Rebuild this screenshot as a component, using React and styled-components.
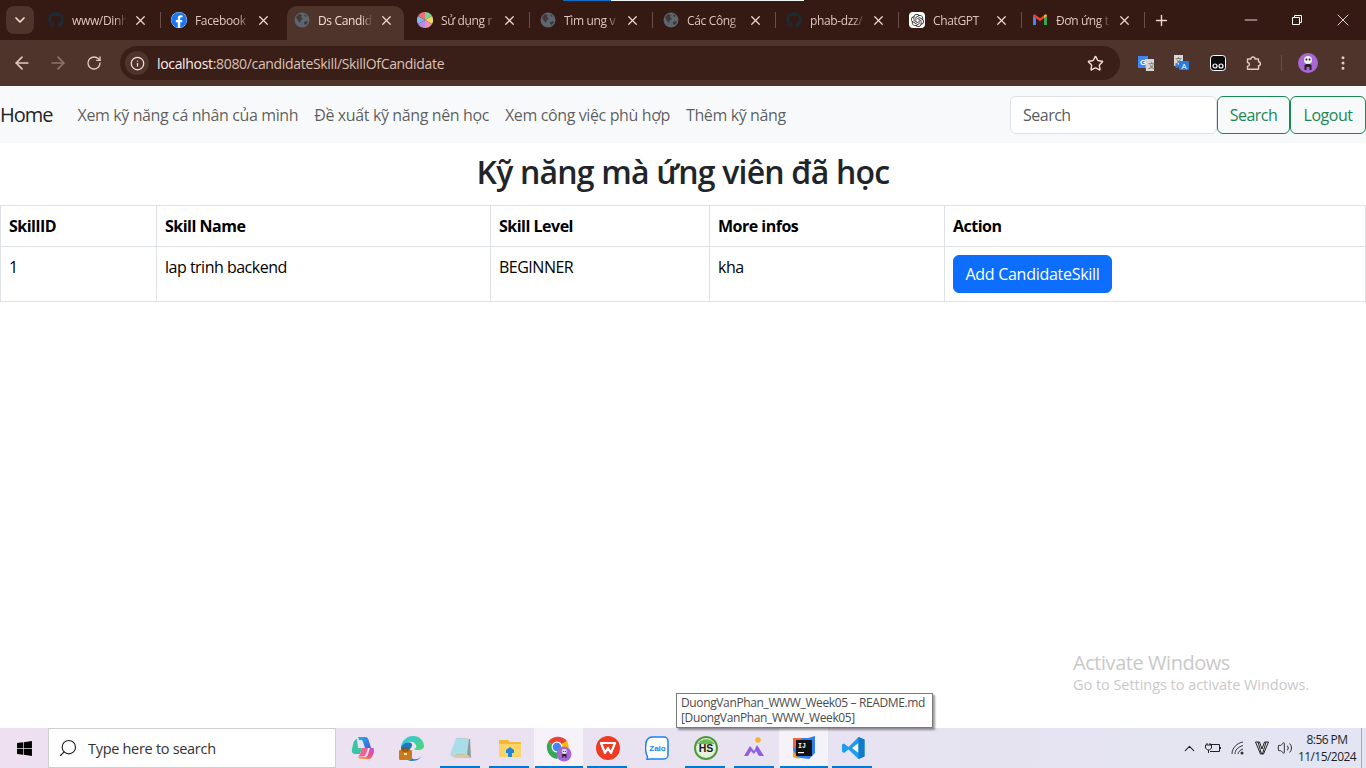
import React from 'react';
import styled, { createGlobalStyle } from 'styled-components';
import {
  ArrowLeft, ArrowRight, RotateCw, Info, Star, MoreVertical, X, Plus, Minus, ChevronDown, ChevronUp, Search as SearchIcon, Volume2,
} from 'lucide-react';
import { FaGithub, FaFacebook, FaWindows } from 'react-icons/fa';
import { SiOpenai } from 'react-icons/si';

const UI_FONT = '"Open Sans", "Noto Sans", "Liberation Sans", sans-serif';

const GlobalStyle = createGlobalStyle`
  html, body { margin: 0; padding: 0; height: 100%; overflow: hidden; background: #fff; }
  body { font-family: ${UI_FONT}; color: #212529; }
  * { box-sizing: border-box; }
`;

const Screen = styled.div`
  position: relative;
  display: flex;
  flex-direction: column;
  width: 1366px;
  height: 768px;
  overflow: hidden;
`;

/* browser chrome */
const TabStrip = styled.div`
  position: relative;
  display: flex;
  align-items: flex-end;
  height: 40px;
  padding-left: 5px;
  background: #351a14;
`;

const ShareBar = styled.div`
  position: absolute;
  top: 0;
  left: 563px;
  display: flex;
  height: 1px;
`;

const ShareSegment = styled.div`
  width: ${p => p.$w}px;
  background: ${p => p.$c};
`;

const TabMenu = styled.div`
  display: flex;
  align-items: center;
  justify-content: center;
  flex: none;
  width: 28px;
  height: 28px;
  margin: 0 4px 6px 1px;
  border-radius: 8px;
  background: #4f342c;
  color: #f3dfd6;
`;

const Tab = styled.div`
  position: relative;
  display: flex;
  align-items: center;
  flex: none;
  width: 123px;
  height: 34px;
  padding: 0 13px 6px 10px;
  color: ${p => (p.$active ? '#f0ddd4' : '#e0c5ba')};
  font-size: 12px;

  &::before {
    content: '';
    display: ${p => (p.$active ? 'block' : 'none')};
    position: absolute;
    z-index: 0;
    top: 0;
    bottom: 0;
    left: 3px;
    right: 3px;
    background: #4f342c;
    border-radius: 10px 10px 0 0;
  }

  &::after {
    content: '';
    display: ${p => (p.$sep ? 'block' : 'none')};
    position: absolute;
    right: 0;
    top: 6px;
    width: 1px;
    height: 16px;
    background: #6a4f46;
  }

  > * {
    position: relative;
    z-index: 1;
  }
`;

const Favicon = styled.span`
  display: flex;
  align-items: center;
  justify-content: center;
  flex: none;
  width: 16px;
  height: 16px;
  margin-right: 8px;
  background: ${p => p.$plate || 'transparent'};
  border-radius: ${p => p.$round || 0};
`;

const TabTitle = styled.span`
  flex: 1;
  min-width: 0;
  white-space: nowrap;
  letter-spacing: -0.35px;
  -webkit-mask-image: linear-gradient(90deg, #000 78%, transparent 100%);
  mask-image: linear-gradient(90deg, #000 78%, transparent 100%);
`;

const TabClose = styled.span`
  display: flex;
  flex: none;
  margin-left: 6px;
  color: #eed6cb;
`;

const NewTab = styled.div`
  display: flex;
  align-items: center;
  height: 34px;
  margin-left: 8px;
  padding-bottom: 6px;
  color: #ecd8ce;
`;

const WindowControls = styled.div`
  display: flex;
  margin-left: auto;
  align-self: flex-start;
`;

const WindowButton = styled.div`
  display: flex;
  align-items: center;
  justify-content: center;
  width: 46px;
  height: 40px;
  color: #fff;
`;

const Toolbar = styled.div`
  display: flex;
  align-items: center;
  height: 46px;
  padding: 0 4px;
  background: #4f342c;
  color: #e6c9bd;
`;

const NavButton = styled.div`
  display: flex;
  align-items: center;
  justify-content: center;
  flex: none;
  width: 36px;
  height: 34px;
  color: ${p => (p.$off ? '#8e746a' : '#e6c9bd')};
`;

const Omnibox = styled.div`
  display: flex;
  align-items: center;
  flex: none;
  width: 1000px;
  height: 34px;
  margin-left: 8px;
  padding: 0 16px 0 5px;
  border-radius: 17px;
  background: #3a1f18;
`;

const InfoChip = styled.div`
  display: flex;
  align-items: center;
  justify-content: center;
  width: 24px;
  height: 24px;
  margin-right: 8px;
  border-radius: 50%;
  background: #4f342c;
  color: #f3e3db;
`;

const Url = styled.div`
  flex: 1;
  font-size: 14px;
  letter-spacing: -0.33px;
  color: #dcc2b7;

  b {
    font-weight: 400;
    color: #fbeee8;
  }
`;

const ExtensionRow = styled.div`
  display: flex;
  align-items: center;
  margin-left: 8px;
`;

const ExtensionSlot = styled.div`
  display: flex;
  align-items: center;
  justify-content: center;
  width: 36px;
  height: 32px;
`;

const ToolbarDivider = styled.div`
  width: 1px;
  height: 16px;
  margin: 0 8px 0 9px;
  background: #6a4f46;
`;

const Avatar = styled.div`
  display: flex;
  align-items: center;
  justify-content: center;
  width: 20px;
  height: 20px;
  margin: 0 7px 0 8px;
  border-radius: 50%;
  background: #a768d6;
`;

/* web page */
const Page = styled.main`
  flex: 1;
  min-height: 0;
  background: #fff;
`;

const Navbar = styled.nav`
  display: flex;
  align-items: center;
  height: 57px;
  background: #f8f9fa;
`;

const Brand = styled.a`
  margin-right: 17px;
  font-size: 20px;
  color: #212529;
  letter-spacing: -1px;
`;

const NavLink = styled.a`
  padding: 8px;
  font-size: 16px;
  letter-spacing: -0.38px;
  color: rgba(0, 0, 0, 0.65);
`;

const SearchForm = styled.form`
  display: flex;
  margin-left: auto;
`;

const SearchInput = styled.input`
  width: 207px;
  height: 38px;
  padding: 6px 12px;
  font: inherit;
  font-size: 16px;
  letter-spacing: -0.5px;
  color: #212529;
  background: #fff;
  border: 1px solid #dee2e6;
  border-radius: 6px;
  outline: none;

  &::placeholder {
    color: #595c5f;
    opacity: 1;
  }
`;

const OutlineButton = styled.button`
  width: ${p => p.$w}px;
  height: 38px;
  padding: 0;
  font: inherit;
  font-size: 16px;
  letter-spacing: -0.5px;
  color: #198754;
  background: transparent;
  border: 1px solid #198754;
  border-radius: 6px;
`;

const Title = styled.h2`
  margin: 10px 0 14px;
  font-size: 32px;
  font-weight: 600;
  line-height: 38px;
  letter-spacing: -0.8px;
  text-align: center;
  color: #212529;
`;

const Table = styled.table`
  width: 100%;
  table-layout: fixed;
  border-collapse: collapse;
  font-size: 16px;
  letter-spacing: -0.5px;
  color: #000;
`;

const Col = styled.col`
  width: ${p => p.$w}px;
`;

const Th = styled.th`
  padding: 8px;
  font-weight: 700;
  line-height: 24px;
  text-align: left;
  border: 1px solid #dee2e6;
`;

const Td = styled.td`
  padding: 8px;
  line-height: 24px;
  vertical-align: top;
  border: 1px solid #dee2e6;
`;

const PrimaryButton = styled.button`
  display: block;
  width: 159px;
  height: 38px;
  padding: 0;
  font: inherit;
  letter-spacing: -0.28px;
  color: #fff;
  background: #0d6efd;
  border: 1px solid #0d6efd;
  border-radius: 6px;
`;

/* overlays */
const ActivateNote = styled.div`
  position: absolute;
  left: 1073px;
  top: 650px;
  color: #c9c9c9;
`;

const ActivateTitle = styled.div`
  font-size: 20px;
  line-height: 25px;
  letter-spacing: -0.45px;
`;

const ActivateHint = styled.div`
  font-size: 14.5px;
  line-height: 20px;
  letter-spacing: -0.04px;
`;

const Tooltip = styled.div`
  position: absolute;
  left: 676px;
  top: 693px;
  width: 257px;
  height: 35px;
  padding: 1px 4px;
  font-size: 12px;
  line-height: 15px;
  letter-spacing: -0.37px;
  white-space: nowrap;
  color: #4c4c4c;
  background: #fff;
  border: 1px solid #7b7b7b;
  box-shadow: 2px 2px 2px rgba(0, 0, 0, 0.4);
`;

/* windows taskbar */
const Taskbar = styled.footer`
  display: flex;
  align-items: stretch;
  height: 40px;
  background: linear-gradient(90deg, #eee0f0 0%, #e9e2f1 50%, #e3e5f2 100%);
`;

const StartButton = styled.div`
  display: flex;
  align-items: center;
  justify-content: center;
  width: 48px;
  color: #000;
`;

const TaskSearch = styled.div`
  display: flex;
  align-items: center;
  width: 288px;
  margin-right: 2px;
  padding-left: 9px;
  font-size: 14.5px;
  letter-spacing: -0.3px;
  color: #333;
  background: #fff;
  border: 1px solid #cfcfcf;
`;

const SearchGlyph = styled.span`
  display: flex;
  margin-right: 10px;
  color: #222;
  transform: scaleX(-1);
`;

const AppSlot = styled.div`
  position: relative;
  display: flex;
  align-items: center;
  justify-content: center;
  width: 49px;
  background: ${p => (p.$active ? 'rgba(255, 255, 255, 0.55)' : 'transparent')};

  &::after {
    content: '';
    display: ${p => (p.$open ? 'block' : 'none')};
    position: absolute;
    bottom: 0;
    left: ${p => (p.$active ? 1 : 4)}px;
    right: ${p => (p.$active ? 0 : 5)}px;
    height: 2px;
    background: #0078d4;
  }
`;

const Tray = styled.div`
  display: flex;
  align-items: center;
  margin-left: auto;
  color: #222;
`;

const TrayIcon = styled.span`
  display: flex;
  align-items: center;
  justify-content: center;
  width: ${p => p.$w || 24}px;
`;

const Clock = styled.div`
  width: 60px;
  margin: 0 4px 0 0;
  font-size: 12px;
  line-height: 17px;
  letter-spacing: -0.55px;
  text-align: center;
  color: #1f1f1f;
`;

const DesktopPeek = styled.div`
  width: 5px;
  height: 100%;
  border-left: 1px solid #a9a9b5;
`;

/* drawn icons */
const GlobeIcon = () => (
  <svg width="16" height="16" viewBox="0 0 16 16">
    <circle cx="8" cy="8" r="7.5" fill="#5b6670" />
    <path d="M2 5l3-3 3 1-1 2 2 2-2 1-1 3-2-2-1-2zM10 10l3-1 1 1-2 3-2-1zM10 2l3 2-2 1z" fill="#351a14" opacity="0.6" />
  </svg>
);

const ColorWheelIcon = () => (
  <svg width="16" height="16" viewBox="0 0 16 16">
    <path d="M8 8V0a8 8 0 0 1 7 4z" fill="#7ed18f" />
    <path d="M8 8l7-4a8 8 0 0 1 0 8z" fill="#f2d75e" />
    <path d="M8 8l7 4a8 8 0 0 1-7 4z" fill="#f08fb6" />
    <path d="M8 8v8a8 8 0 0 1-7-4z" fill="#b58ae8" />
    <path d="M8 8l-7 4a8 8 0 0 1 0-8z" fill="#7fb7ee" />
    <path d="M8 8L1 4a8 8 0 0 1 7-4z" fill="#ea6f72" />
  </svg>
);

const GmailIcon = () => (
  <svg width="16" height="16" viewBox="0 0 16 16">
    <path d="M1 13V4l3 2v7z" fill="#4285f4" />
    <path d="M12 13V6l3-2v9z" fill="#34a853" />
    <path d="M1 4c0-1.3 1.3-2 2.3-1.3L8 6.3l4.7-3.6C13.7 2 15 2.7 15 4l-7 5.2z" fill="#ea4335" />
    <path d="M12 3.6l.7-.9C13.7 2 15 2.7 15 4l-3 2.2z" fill="#fbbc04" />
  </svg>
);

const TranslateExt = () => (
  <svg width="17" height="16" viewBox="0 0 17 16">
    <rect x="0" y="1" width="10" height="12" fill="#4285f4" />
    <path d="M7 4h9v12H8z" fill="#d5d5d5" />
    <text x="2" y="10" fontSize="8" fontWeight="700" fill="#fff" fontFamily="Liberation Sans, sans-serif">G</text>
    <text x="10" y="13" fontSize="7" fill="#666" fontFamily="Noto Sans CJK SC, sans-serif">文</text>
  </svg>
);

const TranslateAltExt = () => (
  <svg width="16" height="16" viewBox="0 0 16 16">
    <rect x="0" y="0" width="9" height="11" fill="#d9d9d9" />
    <text x="1" y="8" fontSize="7" fill="#555" fontFamily="Noto Sans CJK SC, sans-serif">文</text>
    <rect x="5" y="6" width="10" height="9" rx="1" fill="#2a7ae2" />
    <text x="7.5" y="13.5" fontSize="7.5" fill="#fff" fontFamily="Liberation Sans, sans-serif">A</text>
    <circle cx="3" cy="11" r="2" fill="#2a7ae2" />
  </svg>
);

const GlassesExt = () => (
  <svg width="16" height="16" viewBox="0 0 16 16">
    <rect x="0.5" y="0.5" width="15" height="15" rx="3" fill="#0b0b0b" stroke="#fff" />
    <circle cx="5" cy="11" r="2" fill="none" stroke="#fff" strokeWidth="1.2" />
    <circle cx="11" cy="11" r="2" fill="none" stroke="#fff" strokeWidth="1.2" />
  </svg>
);

const PuzzleExt = () => (
  <svg width="16" height="16" viewBox="0 0 16 16" fill="none" stroke="#e6c9bd" strokeWidth="1.4" strokeLinejoin="round">
    <path d="M1.500 4H5a2 2 0 0 1 4 0h3.500v2.800a1.900 1.900 0 0 1 0 3.800v3.700H1.500v-3a1.900 1.900 0 0 0 0-3.800z" />
  </svg>
);

const SpyFace = () => (
  <svg width="14" height="16" viewBox="0 0 14 16">
    <circle cx="7" cy="5" r="4" fill="#eee" />
    <circle cx="5.4" cy="4.6" r="1" fill="#222" />
    <circle cx="8.6" cy="4.6" r="1" fill="#222" />
    <path d="M3.5 15V10.5C3.5 9.5 5 9 7 9s3.5.5 3.5 1.5V15H8.5v-3h-3v3z" fill="#222" />
  </svg>
);

const CopilotIcon = () => (
  <svg width="24" height="24" viewBox="0 0 24 24">
    <defs>
      <linearGradient id="cp1" x1="0" y1="0" x2="1" y2="1">
        <stop offset="0" stopColor="#1fb6e8" />
        <stop offset="1" stopColor="#3f5be0" />
      </linearGradient>
      <linearGradient id="cp2" x1="0" y1="1" x2="1" y2="0">
        <stop offset="0" stopColor="#f5c33b" />
        <stop offset="0.5" stopColor="#f0527e" />
        <stop offset="1" stopColor="#b44fd8" />
      </linearGradient>
    </defs>
    <path d="M7 1h7c2 0 3 1 3.600 3L20 12H14L12 6c-.5-1.500-1-2-2-2H8z" fill="url(#cp1)" />
    <path d="M6 3c-2 .5-3 2-3.600 4L1 13c-.6 3 .6 5 3 5h5l2-6H7z" fill="#39c4a6" />
    <path d="M18 23h-8c-2 0-2.500-1-3.500-2H14c1.500 0 2.500-1 3-2.500L19 12h3.500c.8 3 .5 5-.7 7-1 2.500-2 4-3.800 4z" fill="url(#cp2)" />
    <path d="M11 12h6l-2 6c-.5 1.500-1.500 2.500-3 2.500H7l2-2z" fill="#f06292" />
  </svg>
);

const EdgeIcon = () => (
  <svg width="26" height="26" viewBox="0 0 26 26">
    <defs>
      <linearGradient id="ed1" x1="0" y1="0" x2="1" y2="1">
        <stop offset="0" stopColor="#2fc4e8" />
        <stop offset="1" stopColor="#52d86a" />
      </linearGradient>
    </defs>
    <path d="M2 12C3 5 8 1 14 1c7 0 11 5 11 10 0 3-3 4-6 4-2 0-4-.5-4-1 2-1 3-2 2-4-1-3-5-4-8-3-3 1-6 3-7 5z" fill="url(#ed1)" />
    <path d="M2 12c2-4 8-6 10-4 2 1.500 1 4-1 6-2 3-1 8 3 10 4 1 8-1 10-4-2 3-6 6-11 6C7 26 1 20 2 12z" fill="#1b78c4" />
    <rect x="0" y="15" width="13" height="10" rx="1" fill="#c87a1c" />
    <rect x="4" y="13" width="5" height="3" fill="none" stroke="#8b5212" strokeWidth="1.2" />
    <rect x="5" y="18" width="3" height="2" fill="#fde3a7" />
  </svg>
);

const NotesIcon = () => (
  <svg width="24" height="24" viewBox="0 0 24 24">
    <path d="M7 2l14 1 1 19-15-3z" fill="#8d9aa0" />
    <path d="M7 2l13 1-2 15-17 1z" fill="#a9dde8" />
    <path d="M1 19l17-1 4 4-16 0z" fill="#d8c9a6" />
  </svg>
);

const FolderIcon = () => (
  <svg width="24" height="22" viewBox="0 0 24 22">
    <path d="M1 3h9l2 2h11v15H1z" fill="#f5b93a" />
    <path d="M1 7h22v13H1z" fill="#fbd468" />
    <path d="M8 13l4-3 4 3v3h-2v4h-4v-4H8z" fill="#1e88d8" />
  </svg>
);

const ChromeIcon = () => (
  <svg width="27" height="27" viewBox="0 0 27 27">
    <path d="M12 12L3 7a12 12 0 0 1 19-1z" fill="#ea4335" />
    <path d="M12 12l10-6a12 12 0 0 1-10 18z" fill="#fbbc04" />
    <path d="M12 12l0 12A12 12 0 0 1 3 7z" fill="#34a853" />
    <circle cx="12" cy="12" r="5.500" fill="#fff" />
    <circle cx="12" cy="12" r="4.300" fill="#4285f4" />
    <circle cx="19" cy="19" r="7.500" fill="#a768d6" />
    <g transform="translate(15 13.500) scale(0.62)"><SpyFace /></g>
  </svg>
);

const WpsIcon = () => (
  <svg width="24" height="24" viewBox="0 0 24 24">
    <circle cx="12" cy="12" r="12" fill="#ee3b24" />
    <path d="M5 7h14l-4 10-3-5-3 5z" fill="none" stroke="#fff" strokeWidth="2.200" strokeLinejoin="round" />
  </svg>
);

const ZaloIcon = () => (
  <svg width="24" height="24" viewBox="0 0 24 24">
    <path d="M7 1h12a4 4 0 0 1 4 4v14a4 4 0 0 1-4 4H7a10 10 0 0 1-3 0l-2 .5.5-3C0 17 0 7 2 4a6 6 0 0 1 5-3z" fill="#fff" stroke="#1b83ee" strokeWidth="1.500" />
    <text x="12.500" y="15" fontSize="8" fontWeight="700" textAnchor="middle" fill="#1b83ee" fontFamily="Liberation Sans, sans-serif">Zalo</text>
  </svg>
);

const HsIcon = () => (
  <svg width="24" height="24" viewBox="0 0 24 24">
    <circle cx="12" cy="12" r="12" fill="#4d9a3e" />
    <circle cx="12" cy="12" r="10" fill="#e6f2da" />
    <path d="M3.500 8a10 10 0 0 1 17 0z" fill="#6cbb52" />
    <text x="12" y="16" fontSize="10.500" fontWeight="700" textAnchor="middle" fill="#1a1a1a" fontFamily="Liberation Sans, sans-serif">HS</text>
  </svg>
);

const MountainIcon = () => (
  <svg width="24" height="24" viewBox="0 0 24 24">
    <circle cx="15" cy="4" r="2.800" fill="#f9b233" />
    <path d="M1 20l6-10 4 5 3-6 7 11h-5l-3-5-2 3-3-3-3 5z" fill="#8f5fe0" />
  </svg>
);

const IntellijIcon = () => (
  <svg width="24" height="24" viewBox="0 0 24 24">
    <path d="M1 2h15l7-2v17l-6 6-16-2z" fill="#2f7df0" />
    <path d="M1 2h9L1 14z" fill="#f5633b" />
    <path d="M1 14l6 9-6-2z" fill="#f0a32b" />
    <rect x="4" y="4" width="16" height="16" fill="#111" />
    <text x="6" y="12" fontSize="6.500" fontWeight="700" fill="#fff" fontFamily="Liberation Mono, monospace">IJ</text>
    <rect x="6" y="16" width="6" height="1.200" fill="#fff" />
  </svg>
);

const VsCodeIcon = () => (
  <svg width="24" height="24" viewBox="0 0 24 24">
    <path d="M17.500 1L23.500 3.500v17l-6 2.500-10-9.500-4.500 3.500L1 15.500V8.500L3 7.500l4.500 3.500z" fill="#1f9cf0" />
    <path d="M17.500 7v10L11 12z" fill="#fff" opacity="0.95" />
    <path d="M17.500 1L23.500 3.500v17l-6 2.500z" fill="#0f7cc8" />
  </svg>
);

const BatteryPlugIcon = () => (
  <svg width="16" height="12" viewBox="0 0 16 12" fill="none" stroke="#222">
    <path d="M5 2.500h9.500v7H5" />
    <path d="M15.500 5v2" />
    <path d="M2 1v2M5 1v2M.5 3h6v3l-2 2h-2l-2-2zM3.500 8v3" />
  </svg>
);

const WifiIcon = () => (
  <svg width="16" height="14" viewBox="0 0 16 14" fill="none" stroke="#333">
    <path d="M1 13C1 7 6 2 12 1" />
    <path d="M4 13c0-4 3-7 8-8.500" />
    <path d="M7 13c0-2 2-4 5-5" />
    <circle cx="11" cy="12" r="1.500" fill="#333" stroke="none" />
  </svg>
);

const VeeIcon = () => (
  <svg width="14" height="14" viewBox="0 0 14 14" fill="none" stroke="#222">
    <path d="M.5 1h4l2.500 7 2.500-7h4L8.500 13h-3zM3 1l3.500 12M11 1L7.500 13" />
  </svg>
);

const tabs = [
  { title: 'www/Dinh', icon: <FaGithub size={16} color="#1c2c36" />, sep: true },
  { title: 'Facebook', icon: <FaFacebook size={16} color="#1877f2" />, plate: '#fff', round: '50%' },
  { title: 'Ds Candid', icon: <GlobeIcon />, active: true },
  { title: 'Sử dụng r', icon: <ColorWheelIcon />, sep: true },
  { title: 'Tìm ung v', icon: <GlobeIcon />, sep: true },
  { title: 'Các Công', icon: <GlobeIcon />, sep: true },
  { title: 'phab-dzz/', icon: <FaGithub size={16} color="#1c2c36" />, sep: true },
  { title: 'ChatGPT', icon: <SiOpenai size={13} color="#333" />, plate: '#fff', round: '4px', sep: true },
  { title: 'Đơn ứng t', icon: <GmailIcon />, sep: true },
];

const apps = [
  { key: 'copilot', icon: <CopilotIcon /> },
  { key: 'edge', icon: <EdgeIcon /> },
  { key: 'notes', icon: <NotesIcon />, open: true },
  { key: 'folder', icon: <FolderIcon />, open: true },
  { key: 'chrome', icon: <ChromeIcon />, open: true, active: true },
  { key: 'wps', icon: <WpsIcon />, open: true },
  { key: 'zalo', icon: <ZaloIcon /> },
  { key: 'hs', icon: <HsIcon />, open: true },
  { key: 'mountain', icon: <MountainIcon />, open: true },
  { key: 'intellij', icon: <IntellijIcon />, open: true, active: true },
  { key: 'vscode', icon: <VsCodeIcon />, open: true },
];

const columns = [156, 334, 219, 235];

const App = () => (
  <Screen>
    <GlobalStyle />
    <TabStrip>
      <ShareBar>
        <ShareSegment $w={48} $c="#0a6fc9" />
        <ShareSegment $w={193} $c="#f4f4f4" />
      </ShareBar>
      <TabMenu><ChevronDown size={16} strokeWidth={2.5} /></TabMenu>
      {tabs.map(tab => (
        <Tab key={tab.title} $active={tab.active} $sep={tab.sep}>
          <Favicon $plate={tab.plate} $round={tab.round}>{tab.icon}</Favicon>
          <TabTitle>{tab.title}</TabTitle>
          <TabClose><X size={15} strokeWidth={2} /></TabClose>
        </Tab>
      ))}
      <NewTab><Plus size={17} strokeWidth={2} /></NewTab>
      <WindowControls>
        <WindowButton><Minus size={20} strokeWidth={1} /></WindowButton>
        <WindowButton>
          <svg width="10" height="10" viewBox="0 0 10 10" fill="none" stroke="#fff">
            <path d="M.5 2.500h7v7h-7zM2.500 2.500v-2h7v7h-2" />
          </svg>
        </WindowButton>
        <WindowButton><X size={20} strokeWidth={1} /></WindowButton>
      </WindowControls>
    </TabStrip>

    <Toolbar>
      <NavButton><ArrowLeft size={20} /></NavButton>
      <NavButton $off><ArrowRight size={20} /></NavButton>
      <NavButton><RotateCw size={16} /></NavButton>
      <Omnibox>
        <InfoChip><Info size={15} /></InfoChip>
        <Url><b>localhost</b>:8080/candidateSkill/SkillOfCandidate</Url>
        <Star size={17} color="#f0dcd3" />
      </Omnibox>
      <ExtensionRow>
        <ExtensionSlot><TranslateExt /></ExtensionSlot>
        <ExtensionSlot><TranslateAltExt /></ExtensionSlot>
        <ExtensionSlot><GlassesExt /></ExtensionSlot>
        <ExtensionSlot><PuzzleExt /></ExtensionSlot>
        <ToolbarDivider />
        <Avatar><SpyFace /></Avatar>
        <NavButton><MoreVertical size={18} /></NavButton>
      </ExtensionRow>
    </Toolbar>

    <Page>
      <Navbar>
        <Brand>Home</Brand>
        <NavLink>Xem kỹ năng cá nhân của mình</NavLink>
        <NavLink>Đề xuất kỹ năng nên học</NavLink>
        <NavLink>Xem công việc phù hợp</NavLink>
        <NavLink>Thêm kỹ năng</NavLink>
        <SearchForm>
          <SearchInput placeholder="Search" />
          <OutlineButton type="button" $w={73}>Search</OutlineButton>
          <OutlineButton type="button" $w={76}>Logout</OutlineButton>
        </SearchForm>
      </Navbar>
      <Title>Kỹ năng mà ứng viên đã học</Title>
      <Table>
        <colgroup>
          {columns.map(w => <Col key={w} $w={w} />)}
          <col />
        </colgroup>
        <thead>
          <tr>
            <Th>SkillID</Th>
            <Th>Skill Name</Th>
            <Th>Skill Level</Th>
            <Th>More infos</Th>
            <Th>Action</Th>
          </tr>
        </thead>
        <tbody>
          <tr>
            <Td>1</Td>
            <Td>lap trinh backend</Td>
            <Td>BEGINNER</Td>
            <Td>kha</Td>
            <Td><PrimaryButton type="button">Add CandidateSkill</PrimaryButton></Td>
          </tr>
        </tbody>
      </Table>
    </Page>

    <Taskbar>
      <StartButton><FaWindows size={17} /></StartButton>
      <TaskSearch>
        <SearchGlyph><SearchIcon size={20} strokeWidth={1.4} /></SearchGlyph>
        Type here to search
      </TaskSearch>
      {apps.map(app => (
        <AppSlot key={app.key} $open={app.open} $active={app.active}>{app.icon}</AppSlot>
      ))}
      <Tray>
        <TrayIcon $w={20}><ChevronUp size={17} strokeWidth={1.5} /></TrayIcon>
        <TrayIcon $w={28}><BatteryPlugIcon /></TrayIcon>
        <TrayIcon $w={24}><WifiIcon /></TrayIcon>
        <TrayIcon $w={22}><VeeIcon /></TrayIcon>
        <TrayIcon $w={24}><Volume2 size={16} strokeWidth={1.4} /></TrayIcon>
        <Clock>
          <div>8:56 PM</div>
          <div>11/15/2024</div>
        </Clock>
        <DesktopPeek />
      </Tray>
    </Taskbar>

    <ActivateNote>
      <ActivateTitle>Activate Windows</ActivateTitle>
      <ActivateHint>Go to Settings to activate Windows.</ActivateHint>
    </ActivateNote>
    <Tooltip>
      DuongVanPhan_WWW_Week05 – README.md
      <br />
      [DuongVanPhan_WWW_Week05]
    </Tooltip>
  </Screen>
);

export default App;
